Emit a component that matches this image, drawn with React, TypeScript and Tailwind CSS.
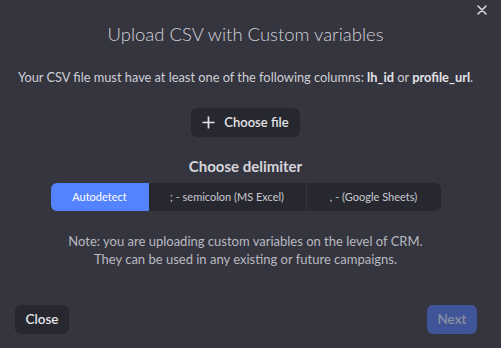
import React from "react";

export default function App() {
  return (
    <div
      className="w-[501px] h-[348px] bg-[#35353f] text-[#d4d4da] flex flex-col relative overflow-hidden"
      style={{ fontFamily: "Lato, 'Open Sans', sans-serif" }}
    >
      <button className="absolute right-[14px] top-[5px] text-[#e0e0e5]">
        <svg width="10" height="10" viewBox="0 0 10 10">
          <path d="M1 1L9 9M9 1L1 9" stroke="currentColor" strokeWidth="1.5" strokeLinecap="round" />
        </svg>
      </button>
      <div className="flex flex-col pr-[10px]">
        <h1 className="text-center text-[18.5px] font-light text-[#d2d2d8] mt-[22px] leading-[24px]">
          Upload CSV with Custom variables
        </h1>
        <p className="text-center text-[12.8px] mt-[22px] leading-[18px] text-[#cfcfd5]">
          Your CSV file must have at least one of the following columns: <b className="font-bold text-[#e2e2e7]">lh_id</b> or{" "}
          <b className="font-bold text-[#e2e2e7]">profile_url</b>.
        </p>
        <div className="flex justify-center mt-[22px]">
          <button className="w-[109px] h-[29px] rounded-[6px] bg-[#27282f] flex items-center justify-center gap-[9px] text-[13px] font-semibold text-[#e4e4e8]">
            <svg width="13" height="13" viewBox="0 0 13 13">
              <path d="M6.5 0.5V12.5M0.5 6.5H12.5" stroke="currentColor" strokeWidth="1.7" />
            </svg>
            Choose file
          </button>
        </div>
        <h2 className="text-center text-[15px] font-bold mt-[19px] leading-[20px] text-[#d6d6db]">Choose delimiter</h2>
        <div className="flex justify-center mt-[7px]">
          <div className="flex w-[390px] h-[28px] rounded-[6px] bg-[#27282f] overflow-hidden text-[11px] text-[#c9c9cf]">
            <div className="w-[98px] bg-[#5383ff] flex items-center justify-center text-white">Autodetect</div>
            <div className="w-[158px] flex items-center justify-center border-r border-[#35353f]">; - semicolon (MS Excel)</div>
            <div className="flex-1 flex items-center justify-center">, - (Google Sheets)</div>
          </div>
        </div>
        <p className="text-center text-[13px] mt-[21px] leading-[18px] text-[#b9b9c0]">
          Note: you are uploading custom variables on the level of CRM.
          <br />
          They can be used in any existing or future campaigns.
        </p>
      </div>
      <div className="flex justify-between px-[15px] mt-auto mb-[14px]">
        <button className="w-[54px] h-[29px] rounded-[6px] bg-[#27282f] text-[13.5px] font-semibold text-[#e4e4e8]">Close</button>
        <button className="w-[50px] h-[29px] rounded-[6px] bg-[#3f5597] text-[13.5px] font-semibold text-[#8a8fa3] mr-[9px]">Next</button>
      </div>
    </div>
  );
}
